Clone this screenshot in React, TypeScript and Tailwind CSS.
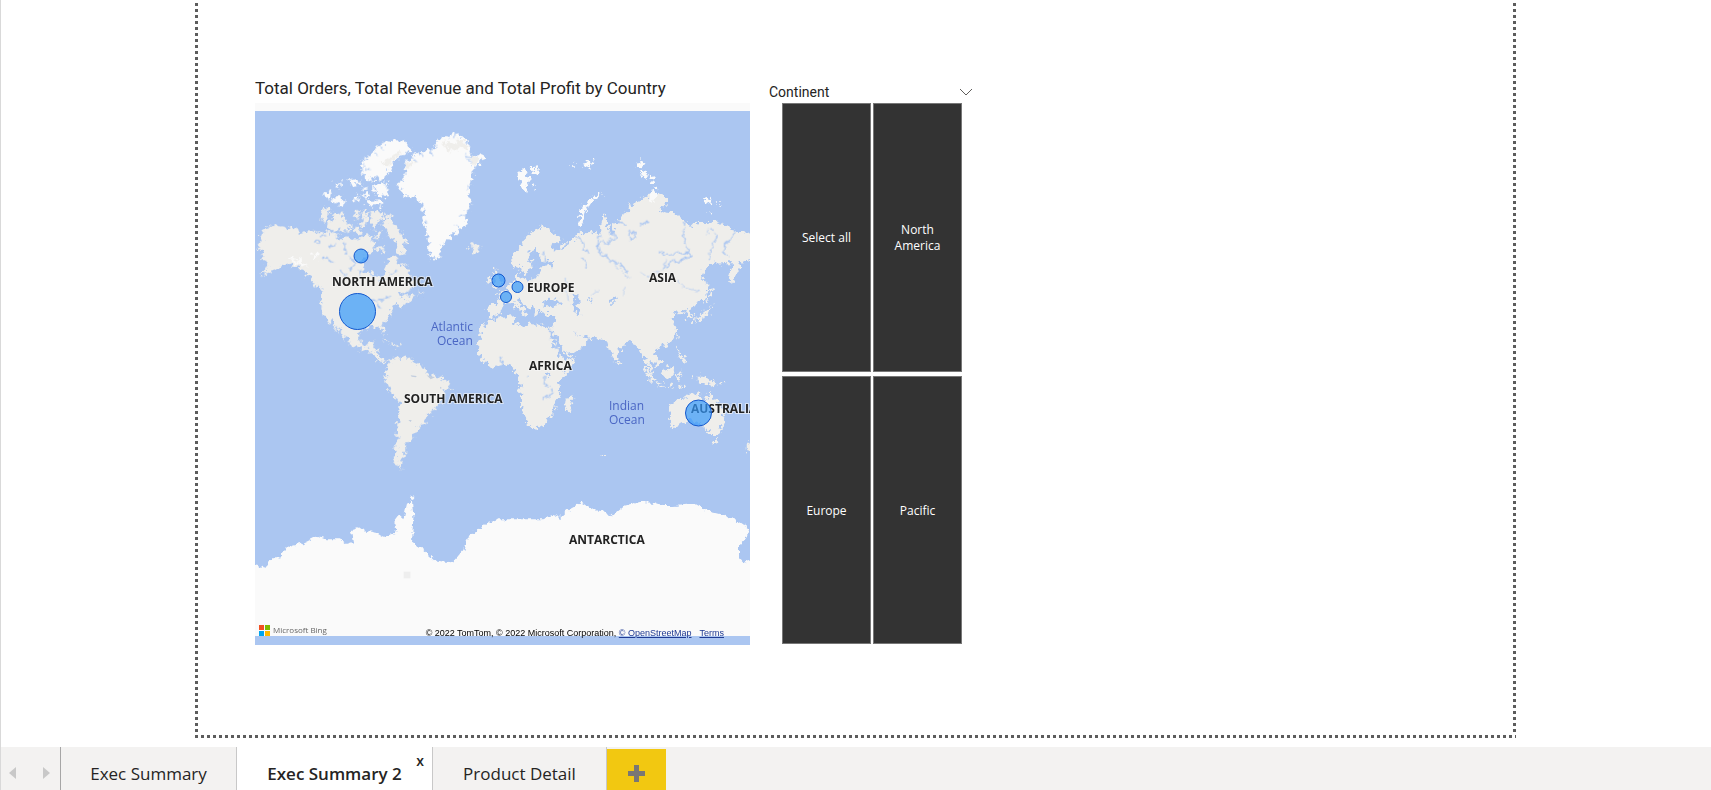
import React from "react";

const ICE = "#fafafa";
const LAND = "#efeeeb";
const WATER = "#abc6f1";

type Bubble = { name: string; x: number; y: number; r: number };

const bubbles: Bubble[] = [
  { name: "Canada", x: 106, y: 153, r: 7 },
  { name: "United States", x: 102.5, y: 208.5, r: 18 },
  { name: "United Kingdom", x: 243.5, y: 177.5, r: 6.5 },
  { name: "France", x: 251, y: 194, r: 5.5 },
  { name: "Germany", x: 262.5, y: 184, r: 5.5 },
  { name: "Australia", x: 443.5, y: 310, r: 13 },
];

const continents = [
  { name: "NORTH AMERICA", x: 77, y: 183 },
  { name: "SOUTH AMERICA", x: 149, y: 300 },
  { name: "EUROPE", x: 272, y: 189 },
  { name: "ASIA", x: 394, y: 179 },
  { name: "AFRICA", x: 274, y: 267 },
  { name: "AUSTRALIA", x: 436, y: 310 },
  { name: "ANTARCTICA", x: 314, y: 441 },
];

const oceans = [
  { name: "Atlantic", x: 176, y: 228 },
  { name: "Ocean", x: 182, y: 242 },
  { name: "Indian", x: 354, y: 307 },
  { name: "Ocean", x: 354, y: 321 },
];

function Coastlines() {
  return (
    <g transform="scale(0.33333)">
      <g filter="url(#coast)">
        {/* Americas */}
        <g transform="translate(-45 -99)" fill={LAND}>
          <path d="M52 525L70 515L58 497L78 475L98 466L130 470L165 476L190 488L222 482L240 488L262 484L285 492L300 508L320 502L345 505L372 502L390 495L402 528L390 545L375 560L365 580L375 605L400 612L420 622L432 640L442 622L434 600L448 562L465 562L480 585L500 580L505 610L520 640L510 660L480 672L475 680L500 678L515 690L495 700L485 710L468 700L455 715L450 735L435 750L428 762L432 785L433 800L425 785L415 768L395 770L375 775L360 785L356 805L362 825L380 828L388 815L402 812L400 835L418 842L418 860L432 875L427 880L405 860L385 842L362 838L335 825L315 800L300 780L285 760L290 780L300 797L285 780L272 755L255 740L245 722L243 690L248 665L240 650L220 640L205 620L190 600L170 590L140 578L120 590L100 600L60 615L85 590L75 575L60 570L70 545L55 535Z" />
          <path d="M238 440L248 412L270 420L268 440L252 456Z M262 470L282 432L306 428L312 448L332 470L330 486L300 478L280 486Z M345 428L358 424L356 450L346 446Z M365 425L384 424L382 450L374 476L362 466L372 448Z M392 425L425 424L432 448L412 458L404 482L394 462Z M435 425L452 440L462 466L482 478L486 500L506 516L490 524L496 548L480 554L464 540L470 520L446 500L440 478L426 460L442 450Z M405 530L432 528L432 545L412 546Z M445 565L465 560L474 580L462 592Z M692 530L706 518L722 526L716 542L698 548Z" />
          <path d="M428 806L448 812L445 816L430 810Z M452 820L478 826L475 830L455 828Z M535 665L548 668L540 674Z M490 676L525 672L520 688L498 684Z M338 480L350 470L362 486L350 494Z M405 490L420 486L424 504L410 508Z" />
          <path fill={ICE} d="M365 275L385 262L400 245L420 225L455 210L490 212L514 235L500 250L475 262L460 280L448 300L436 330L420 326L405 318L385 335L370 310Z M250 372L270 360L276 372L258 384Z M270 385L296 380L318 395L310 408L292 404Z M282 342L304 336L300 352Z M324 322L346 330L366 340L360 348L334 342Z M338 378L354 372L358 396L344 394Z M365 355L385 350L376 362Z M378 390L430 388L434 404L400 410L380 404Z M420 340L446 342L440 376L404 372L398 355Z M365 380L385 366L384 384Z" />
          <path fill={ICE} d="M500 275L520 253L545 246L580 238L592 210L620 200L650 190L672 205L688 215L690 245L700 262L725 250L734 262L715 285L698 300L697 330L688 360L692 400L680 430L674 465L650 485L625 505L605 525L600 550L592 568L570 565L567 530L562 500L555 460L550 430L540 395L520 380L490 380L490 360L470 340L490 325L500 305L492 290Z" />
          <path d="M610 215L640 220L665 208L682 220L686 236L660 232L636 242L620 236Z M690 258L708 260L716 272L698 290Z M494 285L516 268L522 278L502 296Z M425 280L470 248L490 245L466 264L440 292Z" />
          <path fill={ICE} d="M148 563L190 575L204 590L186 588L160 575Z M220 550L236 548L234 564L222 566Z" />
        </g>
        <g transform="translate(-45 471)" fill={LAND}>
          <path d="M440 310L460 295L485 292L515 302L550 320L565 345L600 352L630 370L628 388L612 402L602 430L580 448L562 470L550 495L530 500L535 515L515 530L505 545L495 565L495 590L483 598L477 615L492 628L474 622L465 600L468 560L472 510L478 460L478 425L455 405L440 375L433 350L445 330Z" />
          <path d="M412 290L430 300L448 300L440 306L425 304Z" />
        </g>

        {/* Europe and Asia */}
        <g transform="translate(705 -99)" fill={LAND}>
          <path d="M60 575L75 550L95 530L110 500L130 480L160 470L185 485L210 500L212 515L195 518L185 525L195 545L215 530L245 515L262 500L265 488L290 490L318 485L332 490L330 465L338 440L348 435L352 460L355 480L368 500L378 490L360 460L385 458L395 435L420 420L425 400L450 388L475 375L500 370L528 378L528 400L505 420L530 428L560 430L585 450L605 470L620 455L650 460L680 452L720 470L735 485L785 488V570L752 575L745 600L735 620L722 640L716 610L730 580L700 580L660 582L640 600L635 625L655 640L655 660L645 685L620 700L605 708L600 720L610 742L598 747L590 725L570 730L545 722L555 740L548 750L562 775L560 790L545 815L515 830L500 835L495 850L512 875L500 888L485 870L478 880L490 910L480 905L462 865L440 830L425 808L405 825L385 850L378 878L365 860L355 825L340 805L310 805L275 800L255 785L246 772L258 792L275 800L293 810L280 830L250 850L230 858L215 830L195 795L180 775L192 760L200 735L165 735L152 722L145 738L132 730L125 715L108 705L88 692L75 690L90 705L110 725L103 738L85 715L68 700L45 700L38 710L30 730L15 740L-2 738L-5 705L20 702L30 690L20 675L28 668L50 655L60 640L75 635L75 610L85 605L90 622L115 630L140 625L150 610L155 592L185 588L190 575L155 575L145 545L130 530L118 555L125 580L115 610L100 615L92 590L75 598L60 580Z" />
          <path d="M10 600L22 592L22 612L38 640L30 650L5 652L14 635Z M-8 625L5 620L2 642L-10 640Z M72 702L78 704L76 720L70 715Z M665 655L672 650L655 700L650 695Z M655 715L668 705L660 722L650 735L630 748L612 752L632 735Z M606 750L616 752L612 762Z M562 790L568 795L563 806Z M385 868L394 875L388 888L384 880Z" />
          <path fill={ICE} d="M82 310L100 300L115 322L125 328L112 345L108 365L98 358L90 330Z M118 295L150 292L148 308L130 314Z M128 345L138 350L130 356Z M278 278L300 272L318 276L300 288L290 298Z M240 288L252 284L245 294Z M440 290L448 270L462 276L460 292Z M448 305L462 300L474 322L460 324Z M474 332L486 322L494 338L482 344Z M482 360L498 356L500 385L490 404L478 390Z M265 460L270 430L285 400L310 382L334 368L334 378L302 398L285 425L278 460L270 466Z M638 390L662 380L666 398L648 402Z M680 396L692 400L686 406Z M652 424L664 426L658 434Z" />
        </g>
        <g transform="translate(705 471)" fill={LAND}>
          <path d="M-35 250L-36 285L-15 310L5 320L40 315L60 318L75 330L85 350L90 375L95 400L90 430L105 465L115 500L135 503L165 495L190 460L195 430L208 405L205 370L230 335L258 295L225 300L210 285L195 255L175 205L145 195L115 190L100 200L75 185L70 165L40 170L15 178L-10 185L-30 215Z" />
          <path d="M230 412L252 400L247 435L238 455L226 445Z" />
          <path d="M535 440L560 420L585 415L600 400L632 395L626 415L645 425L658 392L670 415L690 440L705 470L690 522L660 522L645 505L625 490L600 480L570 495L545 502L540 470Z M668 540L684 540L680 552L672 550Z M765 565L785 545V575L770 572Z" />
          <path d="M618 350L650 350L684 376L665 380L640 370Z M513 335L550 316L552 332L542 355L522 350Z M458 320L470 325L500 362L490 368L470 345Z M500 370L528 374L526 378L502 376Z M558 340L578 334L566 345L572 362L560 358Z M560 262L572 262L570 280L584 292L588 308L572 300L564 280Z M470 298L484 318L488 332L478 322Z M530 376L550 378L552 382L532 380Z M560 380L590 376L575 386Z M600 345L612 352L602 356Z M690 370L700 364L704 370Z M332 588L346 588L346 591L332 591Z" />
        </g>

        {/* Inland seas */}
        <g transform="translate(705 471)" fill={WATER}>
          <path d="M158 128L175 115L190 122L200 112L208 120L215 135L185 138L162 140Z M246 112L262 105L270 125L262 140L274 165L258 168L250 145Z M170 340L180 336L182 350L172 352Z M357 120L384 112L380 128L360 128Z M292 118L305 112L302 122Z" />
        </g>
      </g>

      {/* Antarctica */}
      <g transform="translate(-45 1101)" fill={ICE} filter="url(#shelf)">
        <path d="M20 285L45 286L75 293L95 262L120 262L140 232L190 220L235 198L260 208L300 208L320 225L342 218L335 180L360 172L375 182L410 188L430 200L470 188L460 155L475 135L490 148L502 97L516 95L520 140L516 218L550 240L590 275L635 280L670 240L680 205L700 190L730 165L780 148L870 148L910 148L940 135L960 145L985 120L1025 98L1060 120L1095 125L1110 142L1150 108L1200 96L1240 98L1265 108L1300 108L1340 105L1370 102L1410 125L1450 135L1485 150L1500 158L1528 178L1515 205L1497 225L1497 265L1510 278L1560 262V498H20Z" />
        <path d="M510 82L528 76L522 84L512 90Z" />
      </g>

      {/* Rivers and lakes */}
      <g transform="translate(705 -99)" fill="none" stroke={WATER} strokeWidth="4" filter="url(#shelf)">
        <path d="M330 495L322 515L328 545L350 565L375 575L400 590L415 610M355 490L372 485L376 505L352 518L330 515M585 455L580 500L590 530L604 555L580 570L545 575L520 595M510 545L540 555L570 548L600 545M665 475L680 500L662 535L658 570M738 478L720 510L705 525L700 550L720 560M420 485L438 490L436 506L420 508ZM450 465L475 455M380 455L410 465M265 505L280 515L282 540L296 550M280 560L292 590M160 545L165 590M140 555L142 600" />
        <path
          strokeWidth="2"
          d="M370 570L390 600L420 625M530 570L520 600L470 620L450 605M560 630L590 655L630 665M300 680L325 660M400 680L405 650M225 620L235 690M650 490L658 478"
        />
      </g>
      <g transform="translate(705 471)" fill="none" stroke={WATER} strokeWidth="4" filter="url(#shelf)">
        <path d="M176 205L196 250L214 286M164 350L164 370L178 380M185 385L187 402M155 420L190 400M30 290L38 315M180 238L190 235M112 350L116 348" />
      </g>
      <g transform="translate(-45 -99)" fill="none" stroke={WATER} strokeWidth="5" filter="url(#shelf)">
        <path d="M225 510L240 520M265 530L290 525M240 500L260 495M310 520L320 550M325 560L350 580L330 600M250 560L280 580M300 600L320 620M355 600L365 620M430 685L450 680M410 700L420 715M395 690L430 692M450 615L470 600" />
        <path
          strokeWidth="3"
          d="M515 262L530 275M540 246L550 262M570 240L578 260M590 228L602 240M402 248L412 258M420 230L432 242M385 300L372 282M552 450L562 460M690 350L678 362M672 430L658 442M660 470L645 462M640 205L645 192M678 250L690 280"
        />
      </g>
      <g transform="translate(-45 471)" fill="#c3cede">
        <path d="M512 346L530 348L528 352L515 350Z M505 480L515 480L512 486Z M560 346L585 352L572 358Z M600 380L606 384L600 386Z" />
      </g>
      <rect x="446" y="1406" width="20" height="20" fill="#eeeeee" />
    </g>
  );
}

function MapVisual() {
  return (
    <div className="relative mt-1">
      <svg
        viewBox="0 0 495 542"
        className="block h-auto w-full"
        role="img"
        aria-label="Map of orders by country"
      >
        <defs>
          <filter id="coast" x="-5%" y="-5%" width="110%" height="110%">
            <feTurbulence type="fractalNoise" baseFrequency="0.07" numOctaves="3" seed="4" result="noise" />
            <feDisplacementMap in="SourceGraphic" in2="noise" scale="34" xChannelSelector="R" yChannelSelector="G" />
          </filter>
          <filter id="shelf" x="-5%" y="-5%" width="110%" height="110%">
            <feTurbulence type="fractalNoise" baseFrequency="0.07" numOctaves="2" seed="9" result="noise" />
            <feDisplacementMap in="SourceGraphic" in2="noise" scale="20" xChannelSelector="R" yChannelSelector="G" />
          </filter>
        </defs>
        <rect width="495" height="542" fill={WATER} />
        <Coastlines />
        <rect width="495" height="8" fill={ICE} />
        <rect y="525" width="495" height="8" fill={ICE} />
        <rect y="533" width="495" height="9" fill={WATER} />
        <g
          className="font-['Open_Sans','Noto_Sans',sans-serif] text-[12px] font-bold"
          fill="#222"
          stroke="#f7f7f7"
          strokeOpacity="0.6"
          strokeWidth="2"
          paintOrder="stroke"
        >
          {continents.map((c) => (
            <text key={c.name} x={c.x} y={c.y}>
              {c.name}
            </text>
          ))}
        </g>
        <g className="font-['Open_Sans','Noto_Sans',sans-serif] text-[12px] font-medium" fill="#4a66c4">
          {oceans.map((o, i) => (
            <text key={i} x={o.x} y={o.y}>
              {o.name}
            </text>
          ))}
        </g>
        {bubbles.map((b) => (
          <circle key={b.name} cx={b.x} cy={b.y} r={b.r} fill="#3499fa" fillOpacity="0.7" stroke="#1257cc" />
        ))}
      </svg>
      <div className="absolute bottom-[9px] left-1 flex items-center gap-[3px]">
        <span className="grid grid-cols-2 gap-px">
          <span className="size-[5px] bg-[#f25022]" />
          <span className="size-[5px] bg-[#7fba00]" />
          <span className="size-[5px] bg-[#00a4ef]" />
          <span className="size-[5px] bg-[#ffb900]" />
        </span>
        <span className="font-['Open_Sans',sans-serif] text-[8px] leading-3 font-medium text-[#666]">Microsoft Bing</span>
      </div>
      <p className="absolute right-[26px] bottom-[6px] font-['Liberation_Sans',Arial,sans-serif] text-[9px] leading-3 whitespace-nowrap text-black">
        © 2022 TomTom, © 2022 Microsoft Corporation,{" "}
        <a href="#openstreetmap" className="text-[#1f3a93] underline">
          © OpenStreetMap
        </a>
        <a href="#terms" className="ml-2 text-[#1f3a93] underline">
          Terms
        </a>
      </p>
    </div>
  );
}

function Slicer() {
  return (
    <section className="flex w-[204px] flex-col">
      <header className="flex h-[22px] items-center justify-between">
        <h2 className="font-[Roboto,sans-serif] text-[14px] leading-5 text-[#252423]">Continent</h2>
        <button type="button" aria-label="Expand Continent" className="flex h-5 items-center">
          <svg width="14" height="8" viewBox="0 0 14 8" fill="none" stroke="#605e5c">
            <path d="M1 1l6 6 6-6" />
          </svg>
        </button>
      </header>
      <div className="mr-[11px] ml-[13px] grid flex-1 grid-cols-2 grid-rows-2 gap-x-[2px] gap-y-1">
        {["Select all", "North America", "Europe", "Pacific"].map((label) => (
          <button
            key={label}
            type="button"
            className="border border-[#777] bg-[#333] px-3 pt-[2px] font-['Open_Sans',sans-serif] text-[12px] leading-4 text-white"
          >
            {label}
          </button>
        ))}
      </div>
    </section>
  );
}

function PageTabs() {
  return (
    <nav className="flex h-[43px] items-stretch bg-[#f3f2f1] font-['Open_Sans',sans-serif] text-[17px] text-[#252423]">
      <div className="flex w-[60px] items-center justify-between border-r border-[#a6a6a6] pt-2 pr-2.5 pl-2">
        <button type="button" aria-label="Previous page">
          <svg width="7" height="12" viewBox="0 0 7 12" fill="#c8c8c8">
            <path d="M7 0v12L0 6z" />
          </svg>
        </button>
        <button type="button" aria-label="Next page">
          <svg width="7" height="12" viewBox="0 0 7 12" fill="#c8c8c8">
            <path d="M0 0v12l7-6z" />
          </svg>
        </button>
      </div>
      <button type="button" className="w-[176px] border-r border-[#c8c8c8] pt-2.5">
        Exec Summary
      </button>
      <div className="relative flex w-[196px] border-r border-[#c8c8c8] bg-white">
        <button type="button" className="flex-1 pt-2.5 font-semibold">
          Exec Summary 2
        </button>
        <button type="button" aria-label="Close page" className="absolute top-1 right-2 text-[14px] leading-5 font-semibold">
          x
        </button>
      </div>
      <button type="button" className="w-[174px] border-r border-[#c8c8c8] pt-2.5">
        Product Detail
      </button>
      <button
        type="button"
        aria-label="New page"
        className="mt-[2px] flex w-[59px] items-center justify-center bg-[#f2c811] pt-2"
      >
        <svg width="17" height="17" viewBox="0 0 17 17" fill="#797775">
          <path d="M6 0h5v6h6v5h-6v6H6v-6H0V6h6z" />
        </svg>
      </button>
    </nav>
  );
}

export default function App() {
  return (
    <div className="flex min-h-screen flex-col border-l border-[#d9d9d9] bg-white">
      <main className="grid flex-1 grid-cols-[3px_1fr_3px] grid-rows-[1fr_3px] pr-[195px] pb-[9px] pl-[194px]">
        <div className="bg-[repeating-linear-gradient(to_bottom,transparent_0_3px,#5c5c5c_3px_6px)]" />
        <div className="flex items-start pt-[74px] pl-[57px]">
          <section className="w-[495px]">
            <h2 className="h-[25px] font-[Roboto,sans-serif] text-[17px] leading-7 text-[#252423]">
              Total Orders, Total Revenue and Total Profit by Country
            </h2>
            <MapVisual />
          </section>
          <div className="ml-[19px] flex self-stretch pt-[7px] pb-[91px]">
            <Slicer />
          </div>
        </div>
        <div className="bg-[repeating-linear-gradient(to_bottom,transparent_0_3px,#5c5c5c_3px_6px)]" />
        <div className="col-span-3 bg-[repeating-linear-gradient(to_right,#5c5c5c_0_3px,transparent_3px_6px)]" />
      </main>
      <PageTabs />
    </div>
  );
}
